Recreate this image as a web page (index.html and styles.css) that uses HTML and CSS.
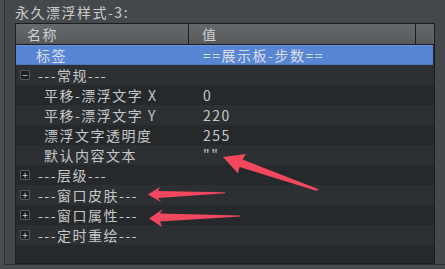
FILE: index.html
```html
<!DOCTYPE html>
<html lang="zh-CN">
<head>
  <meta charset="UTF-8">
  <title>永久漂浮样式-3</title>
  <link rel="stylesheet" href="styles.css">
</head>
<body>
  <div class="panel">
    <div class="title">永久漂浮样式-3:</div>
    <div class="grid">
      <div class="head">
        <div class="hcell">名称</div>
        <div class="hcell val">值</div>
        <div class="hcell spare"></div>
      </div>
      <div class="body">
        <div class="row selected"><div class="name top">标签</div><div class="value">==展示板-步数==</div></div>
        <div class="row"><div class="name group"><span class="toggle">−</span>---常规---</div><div class="value"></div></div>
        <div class="row"><div class="name child">平移-漂浮文字 X</div><div class="value">0</div></div>
        <div class="row"><div class="name child">平移-漂浮文字 Y</div><div class="value">220</div></div>
        <div class="row"><div class="name child">漂浮文字透明度</div><div class="value">255</div></div>
        <div class="row"><div class="name child">默认内容文本</div><div class="value">""</div></div>
        <div class="row"><div class="name group"><span class="toggle">+</span>---层级---</div><div class="value"></div></div>
        <div class="row"><div class="name group"><span class="toggle">+</span>---窗口皮肤---</div><div class="value"></div></div>
        <div class="row"><div class="name group"><span class="toggle">+</span>---窗口属性---</div><div class="value"></div></div>
        <div class="row"><div class="name group"><span class="toggle">+</span>---定时重绘---</div><div class="value"></div></div>
      </div>
    </div>
  </div>

  <!-- annotation arrows drawn over the grid -->
  <svg class="marks" width="445" height="269" viewBox="0 0 445 269">
    <polygon points="223,157 246,154 242.5,159.5 318,189 317,191 239.5,167 238,173.5"/>
    <polygon points="148,194.5 160,187 158,191 225,192.3 225,193.3 158,198 161,202"/>
    <polygon points="149,218.5 163,209 160,213.5 240,215.5 240,216.5 160,221.5 162,227"/>
  </svg>
</body>
</html>
```

FILE: styles.css
```css
html, body {
  margin: 0;
  padding: 0;
  width: 445px;
  height: 269px;
  overflow: hidden;
  background-color: #494c4f;
  font-family: "Noto Sans CJK SC", "Noto Sans", sans-serif;
  font-size: 14px;
  letter-spacing: 1.5px;
  color: #c6c8ca;
  position: relative;
}

.panel {
  margin-left: 4px;
  height: 265px;
  border-left: 1px solid #2c2f31;
  border-bottom: 1px solid #2c2f31;
  background-color: #45484b;
  padding-left: 10px;
  box-sizing: border-box;
}

.title {
  height: 23px;
  line-height: 24px;
  color: #c9cbcc;
}

.grid {
  width: 420px;
  height: 241px;
  border: 1px solid #1b1d1f;
  box-sizing: border-box;
  background-color: #26292b;
  display: flex;
  flex-direction: column;
}

.head {
  display: grid;
  grid-template-columns: 173px 1fr 18px;
  height: 20px;
  border-bottom: 1px solid #1b1d1f;
  background: linear-gradient(#65696c, #565a5d);
}

.hcell {
  line-height: 20px;
  padding-left: 11px;
  color: #cdd0d2;
  border-right: 1px solid #1b1d1f;
}

.hcell.val {
  padding-left: 13px;
}

.hcell.spare {
  border-right: none;
  padding: 0;
}

.row {
  display: grid;
  grid-template-columns: 173px 1fr;
  height: 20px;
  line-height: 20px;
  white-space: nowrap;
}

.row:nth-child(even) {
  background-color: #2d3033;
}

.row.selected {
  background-color: #5985d5;
  box-shadow: inset 0 1px 0 #6b94dc, inset 0 -1px 0 #4f77bf;
  margin-right: 1px;
  color: #d9dfea;
}

.name.top {
  padding-left: 20px;
}

.name.child {
  padding-left: 28px;
}

.name.group {
  padding-left: 5px;
  display: flex;
  align-items: center;
}

.toggle {
  width: 8px;
  height: 8px;
  margin-right: 8px;
  border: 1px solid #55595c;
  border-radius: 1px;
  background-color: #1c1e20;
  color: #d4d6d8;
  font-size: 10px;
  line-height: 8px;
  letter-spacing: 0;
  text-align: center;
  box-sizing: content-box;
  margin-left: -1px;
}

.value {
  padding-left: 14px;
}

.marks {
  position: absolute;
  left: 0;
  top: 0;
  pointer-events: none;
}

.marks polygon {
  fill: #f2475c;
}
```
